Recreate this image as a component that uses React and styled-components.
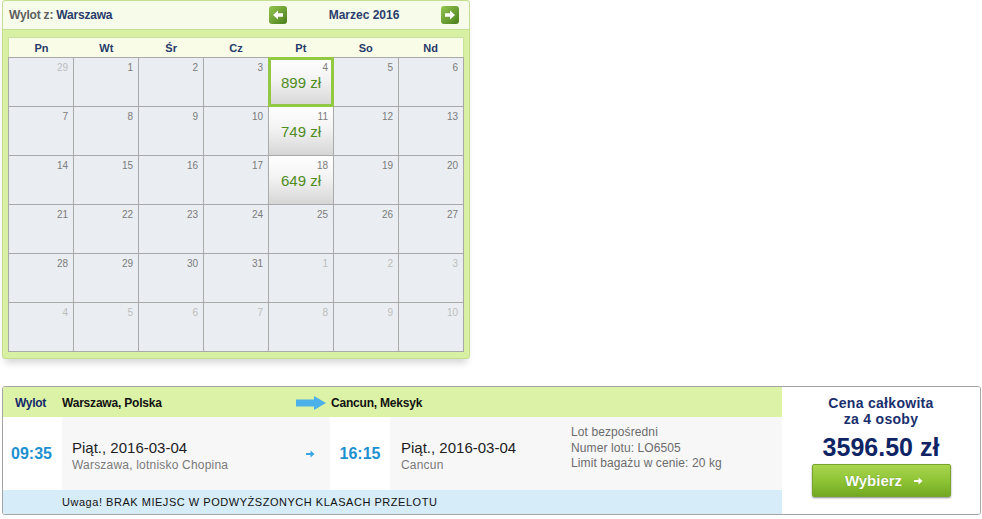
import React from 'react';
import styled, { createGlobalStyle } from 'styled-components';

const GlobalStyle = createGlobalStyle`
    html, body {
        margin: 0;
        padding: 0;
        background: #ffffff;
        font-family: "Liberation Sans", Arial, sans-serif;
    }
`

const Page = styled.div`
    padding: 0 2px;
    width: 979px;
`

// ---------- calendar ----------

const Calendar = styled.div`
    width: 466px;
    border: 1px solid #c4df92;
    border-radius: 3px;
    background: #d8f0a4;
    box-shadow: 0 7px 7px -3px rgba(0, 0, 0, 0.16);
`

const CalHeader = styled.div`
    display: flex;
    align-items: center;
    height: 28px;
    background: #f6fbea;
    border-bottom: 1px solid #c4df92;
    border-radius: 3px 3px 0 0;
    padding-left: 6px;
`

const Origin = styled.div`
    flex: 1;
    font-size: 12px;
    font-weight: bold;
    color: #5f5f5f;
    letter-spacing: -0.2px;

    span {
        color: #263a6b;
    }
`

const MonthNav = styled.div`
    display: flex;
    align-items: center;
    margin-right: 10px;
`

const MonthTitle = styled.div`
    width: 154px;
    text-align: center;
    font-size: 12px;
    font-weight: bold;
    color: #2b3d6c;
`

const NavButton = styled.div`
    width: 18px;
    height: 18px;
    display: flex;
`

const CalBody = styled.div`
    padding: 7px 5px 6px;
`

const DayHeadRow = styled.div`
    display: grid;
    grid-template-columns: repeat(7, 1fr);
    height: 19px;
    background: #f9fde8;
    border: 1px solid #c9e39c;
    border-bottom: none;
`

const DayHead = styled.div`
    display: flex;
    align-items: center;
    justify-content: center;
    font-size: 11px;
    font-weight: bold;
    color: #26396a;
`

const CellGrid = styled.div`
    display: grid;
    grid-template-columns: repeat(7, 1fr);
    grid-auto-rows: 48px;
    gap: 1px;
    background: #a9a9a9;
    border: 1px solid #a9a9a9;
`

const Cell = styled.div`
    position: relative;
    background: ${p => p.$price ? 'linear-gradient(#ffffff 0%, #f3f3f3 45%, #d6d6d6 100%)' : '#eaeef2'};
    ${p => p.$selected && `
        z-index: 1;
        outline: 3px solid #93c843;
        outline-offset: -2px;
    `}
`

const DayNum = styled.div`
    text-align: right;
    padding: 4px 5px 0 0;
    font-size: 10px;
    line-height: 12px;
    color: ${p => p.$other ? '#bdbdbd' : '#7b7b7b'};
`

const Price = styled.div`
    text-align: center;
    font-size: 15px;
    line-height: 18px;
    font-weight: normal;
    color: #4f8c1c;
`

// ---------- flight panel ----------

const Flight = styled.div`
    display: flex;
    margin-top: 27px;
    border: 1px solid #a3a3a3;
    border-radius: 3px;
    overflow: hidden;
`

const FlightMain = styled.div`
    width: 779px;
    display: flex;
    flex-direction: column;
`

const cols = '59px 234px 34px 60px 175px 1fr';

const RouteRow = styled.div`
    display: grid;
    grid-template-columns: ${cols};
    align-items: center;
    height: 30px;
    padding-top: 1px;
    box-sizing: border-box;
    background: #dcf2a6;
    font-size: 12px;
    font-weight: bold;
    color: #111;
`

const RouteLabel = styled.div`
    padding-left: 12px;
    color: #14296a;
    letter-spacing: -0.3px;
`

const RouteCity = styled.div`
    padding-left: ${p => p.$pad || 0}px;
    grid-column: ${p => p.$span || 'auto'};
    letter-spacing: -0.2px;
`

const BigArrow = styled.div`
    display: flex;
    align-items: center;
`

const LegRow = styled.div`
    display: grid;
    grid-template-columns: ${cols};
    height: 73px;
    background: #f7f7f8;
`

const TimeCell = styled.div`
    background: #ffffff;
    display: flex;
    align-items: center;
    justify-content: center;
    font-size: 16px;
    font-weight: bold;
    color: #1e8fcf;
    padding-right: ${p => p.$shift || 0}px;
`

const PlaceCell = styled.div`
    display: flex;
    flex-direction: column;
    justify-content: center;
    padding-left: ${p => p.$pad}px;
    padding-top: 4px;
`

const DateLine = styled.div`
    font-size: 15px;
    line-height: 18px;
    color: #1d1d1d;
`

const PlaceLine = styled.div`
    font-size: 12px;
    line-height: 16px;
    color: #7a7a7a;
    letter-spacing: 0.2px;
`

const SmallArrowCell = styled.div`
    display: flex;
    align-items: center;
    padding-left: 10px;
`

const InfoCell = styled.div`
    padding: 8px 0 0 6px;
    font-size: 12px;
    line-height: 15.5px;
    color: #6b6b6b;
    letter-spacing: 0.1px;
`

const Notice = styled.div`
    height: 24px;
    display: flex;
    align-items: center;
    padding-left: 59px;
    background: #d6ecf8;
    font-size: 11px;
    letter-spacing: 0.53px;
    color: #111;
`

const PriceBox = styled.div`
    flex: 1;
    display: flex;
    flex-direction: column;
    align-items: center;
    padding-top: 8px;
    background: #ffffff;
`

const PriceLabel = styled.div`
    font-size: 14px;
    line-height: 16px;
    font-weight: bold;
    color: #1a2f6d;
    text-align: center;
    letter-spacing: 0.3px;
`

const Total = styled.div`
    margin-top: 6px;
    font-size: 25px;
    line-height: 28px;
    font-weight: bold;
    color: #0e2465;
`

const SelectButton = styled.button`
    margin-top: 3px;
    width: 139px;
    height: 33px;
    display: flex;
    align-items: center;
    justify-content: center;
    gap: 12px;
    padding: 0 0 0 6px;
    border: 1px solid #77a52b;
    border-radius: 2px;
    background: linear-gradient(#a9d54f 0%, #8cc233 55%, #73a922 100%);
    box-shadow: 0 1px 2px rgba(0, 0, 0, 0.45);
    font-family: "Liberation Sans", Arial, sans-serif;
    font-size: 15px;
    font-weight: bold;
    color: #ffffff;
    text-shadow: 0 0 1px rgba(60, 90, 10, 0.6);
    cursor: pointer;
`

const NavIcon = ({ dir }) => (
    <svg width="18" height="18" viewBox="0 0 18 18">
        <defs>
            <linearGradient id={'nav' + dir} x1="0" y1="0" x2="1" y2="1">
                <stop offset="0" stopColor="#94c64e" />
                <stop offset="1" stopColor="#4a7e1d" />
            </linearGradient>
        </defs>
        <rect x="0" y="0" width="18" height="18" rx="3" fill={'url(#nav' + dir + ')'} />
        <polygon
            points={dir === 'left'
                ? '4,9 9,4.5 9,7.3 14,7.3 14,10.7 9,10.7 9,13.5'
                : '14,9 9,4.5 9,7.3 4,7.3 4,10.7 9,10.7 9,13.5'}
            fill="#ffffff"
        />
    </svg>
)

const SmallArrow = ({ color }) => (
    <svg width="9" height="8" viewBox="0 0 9 8">
        <polygon points="0,3 4.5,3 4.5,0.5 8.5,4 4.5,7.5 4.5,5 0,5" fill={color} />
    </svg>
)

const weeks = [
    [[29, 1], [1], [2], [3], [4, 0, '899 zł', 1], [5], [6]],
    [[7], [8], [9], [10], [11, 0, '749 zł'], [12], [13]],
    [[14], [15], [16], [17], [18, 0, '649 zł'], [19], [20]],
    [[21], [22], [23], [24], [25], [26], [27]],
    [[28], [29], [30], [31], [1, 1], [2, 1], [3, 1]],
    [[4, 1], [5, 1], [6, 1], [7, 1], [8, 1], [9, 1], [10, 1]],
]

const dayNames = ['Pn', 'Wt', 'Śr', 'Cz', 'Pt', 'So', 'Nd']

const App = () => {
    return (
        <Page>
            <GlobalStyle />
            <Calendar>
                <CalHeader>
                    <Origin>Wylot z: <span>Warszawa</span></Origin>
                    <MonthNav>
                        <NavButton><NavIcon dir="left" /></NavButton>
                        <MonthTitle>Marzec 2016</MonthTitle>
                        <NavButton><NavIcon dir="right" /></NavButton>
                    </MonthNav>
                </CalHeader>
                <CalBody>
                    <DayHeadRow>
                        {dayNames.map(d => <DayHead key={d}>{d}</DayHead>)}
                    </DayHeadRow>
                    <CellGrid>
                        {weeks.flat().map(([num, other, price, selected], i) => (
                            <Cell key={i} $price={!!price} $selected={!!selected}>
                                <DayNum $other={!!other}>{num}</DayNum>
                                {price && <Price>{price}</Price>}
                            </Cell>
                        ))}
                    </CellGrid>
                </CalBody>
            </Calendar>

            <Flight>
                <FlightMain>
                    <RouteRow>
                        <RouteLabel>Wylot</RouteLabel>
                        <RouteCity>Warszawa, Polska</RouteCity>
                        <BigArrow>
                            <svg width="30" height="14" viewBox="0 0 30 14">
                                <polygon points="0,3.5 18,3.5 18,0 30,7 18,14 18,10.5 0,10.5" fill="#4db1e9" />
                            </svg>
                        </BigArrow>
                        <RouteCity $pad={1} $span="span 3">Cancun, Meksyk</RouteCity>
                    </RouteRow>
                    <LegRow>
                        <TimeCell $shift={2}>09:35</TimeCell>
                        <PlaceCell $pad={10}>
                            <DateLine>Piąt., 2016-03-04</DateLine>
                            <PlaceLine>Warszawa, lotnisko Chopina</PlaceLine>
                        </PlaceCell>
                        <SmallArrowCell><SmallArrow color="#3aa6e2" /></SmallArrowCell>
                        <TimeCell>16:15</TimeCell>
                        <PlaceCell $pad={11}>
                            <DateLine>Piąt., 2016-03-04</DateLine>
                            <PlaceLine>Cancun</PlaceLine>
                        </PlaceCell>
                        <InfoCell>
                            <div>Lot bezpośredni</div>
                            <div>Numer lotu: LO6505</div>
                            <div>Limit bagażu w cenie: 20 kg</div>
                        </InfoCell>
                    </LegRow>
                    <Notice>Uwaga! BRAK MIEJSC W PODWYŻSZONYCH KLASACH PRZELOTU</Notice>
                </FlightMain>
                <PriceBox>
                    <PriceLabel>Cena całkowita<br />za 4 osoby</PriceLabel>
                    <Total>3596.50 zł</Total>
                    <SelectButton>
                        Wybierz
                        <SmallArrow color="#ffffff" />
                    </SelectButton>
                </PriceBox>
            </Flight>
        </Page>
    )
}

export default App;
